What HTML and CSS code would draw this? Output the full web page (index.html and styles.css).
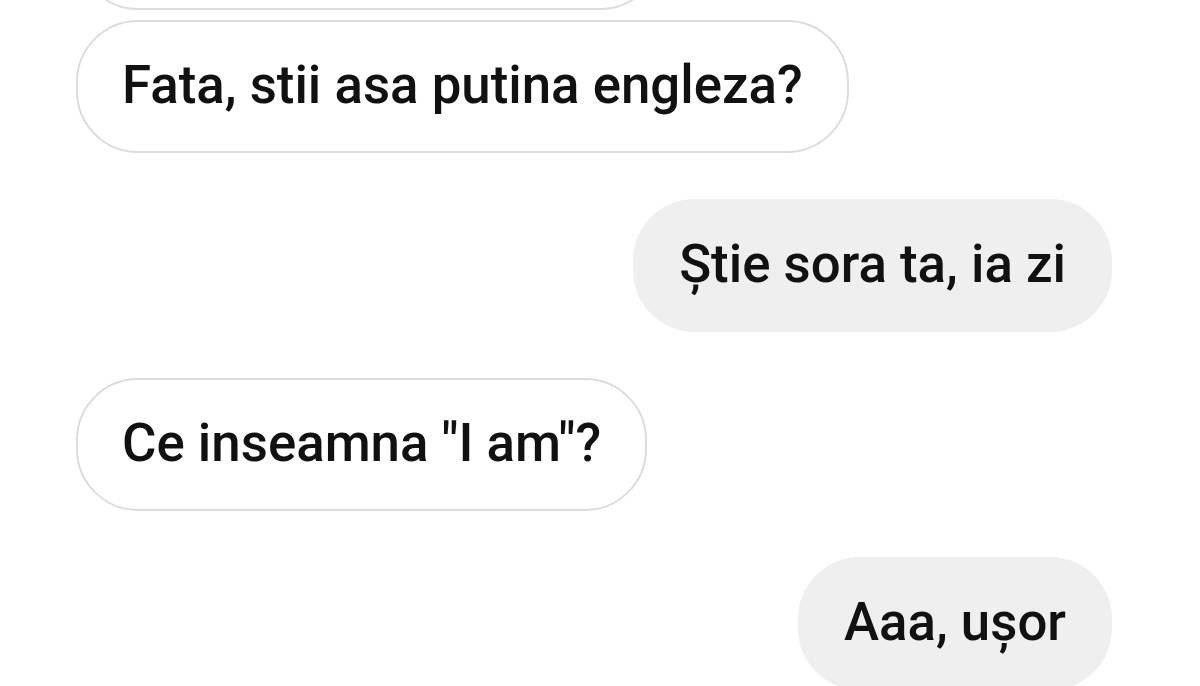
FILE: index.html
```html
<!DOCTYPE html>
<html lang="ro">
<head>
<meta charset="utf-8">
<title>Chat</title>
<link rel="stylesheet" href="styles.css">
</head>
<body>
<div class="chat">
  <div class="msg in first"><span>Ai văzut mesajul meu?</span></div>
  <div class="msg in same"><span>Fata, stii asa putina engleza?</span></div>
  <div class="msg out"><span>Știe sora ta, ia zi</span></div>
  <div class="msg in"><span>Ce inseamna "I am"?</span></div>
  <div class="msg out"><span>Aaa, ușor</span></div>
</div>
</body>
</html>
```
FILE: styles.css
```css
html, body {
  margin: 0;
  padding: 0;
  background: #ffffff;
}
body {
  width: 1200px;
  height: 686px;
  overflow: hidden;
}
.chat {
  display: flex;
  flex-direction: column;
  padding: 0 88px 0 76px;
}
.msg {
  box-sizing: border-box;
  height: 133px;
  display: flex;
  align-items: center;
  padding: 0 44px 4px 44px;
  border-radius: 62px;
  font-family: Roboto, "Liberation Sans", sans-serif;
  font-size: 52.8px;
  font-weight: 500;
  color: #111111;
  white-space: nowrap;
  margin-top: 46px;
}
.msg.in {
  align-self: flex-start;
  background: #ffffff;
  border: 2px solid #dcdcdc;
}
.msg.out {
  align-self: flex-end;
  background: #efefef;
  border: 2px solid #efefef;
}
.msg.first {
  margin-top: -123px;
  width: 586px;
}
.msg.first span {
  visibility: hidden;
}
.msg.same {
  margin-top: 10px;
}
```
